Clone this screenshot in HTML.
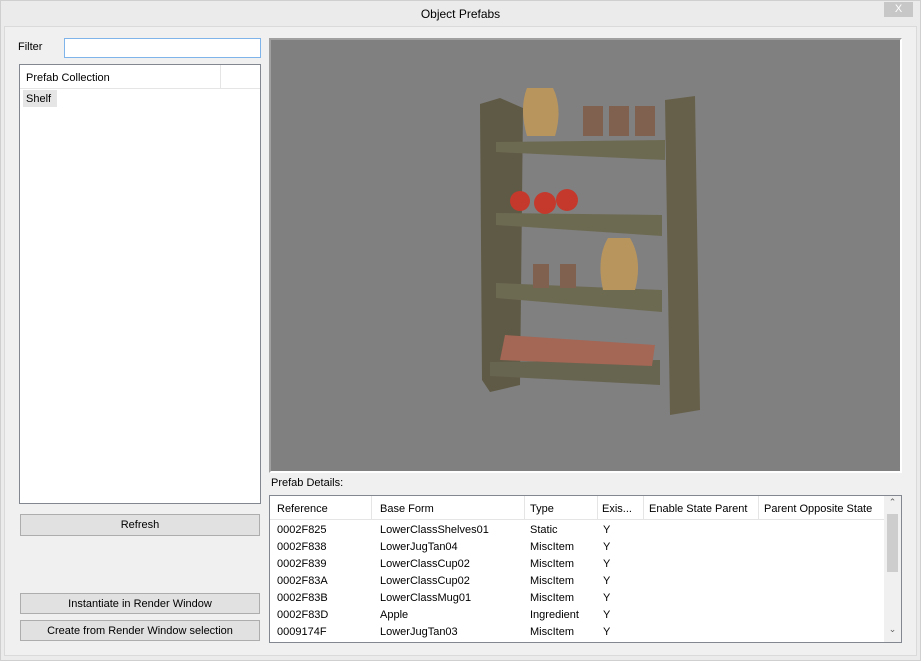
<!DOCTYPE html>
<html><head><style>
*{box-sizing:border-box}
body{margin:0;width:921px;height:661px;background:#ebebeb;font-family:"Liberation Sans",sans-serif;font-size:11px;color:#000;position:relative;overflow:hidden}
.a{position:absolute}
.btn{position:absolute;background:#e1e1e1;border:1px solid #adadad;text-align:center;line-height:20px;font-size:11px}
.row{position:absolute;height:17px;line-height:17px;left:0;width:620px}
.row span{position:absolute}
</style></head><body>
<div class="a" style="left:0;top:0;width:921px;height:661px;border:1px solid #cfcfcf"></div>
<div class="a" style="left:0;top:7px;width:921px;text-align:center;font-size:12px">Object Prefabs</div>
<div class="a" style="left:884px;top:2px;width:29px;height:15px;background:#c7c7c7;color:#fff;text-align:center;line-height:15px;font-size:11px">X</div>
<div class="a" style="left:4px;top:26px;width:913px;height:630px;background:#f0f0f0;border:1px solid #dadada"></div>
<div class="a" style="left:18px;top:41px">Filter</div>
<div class="a" style="left:64px;top:38px;width:197px;height:20px;background:#fff;border:1px solid #7eb4ea"></div>
<div class="a" style="left:19px;top:64px;width:242px;height:440px;background:#fff;border:1px solid #828790"></div>
<div class="a" style="left:20px;top:65px;width:240px;height:24px;border-bottom:1px solid #e5e5e5"></div>
<div class="a" style="left:220px;top:65px;width:1px;height:24px;background:#e5e5e5"></div>
<div class="a" style="left:26px;top:72px">Prefab Collection</div>
<div class="a" style="left:23px;top:90px;width:34px;height:17px;background:#e5e5e5"></div>
<div class="a" style="left:26px;top:93px">Shelf</div>
<div class="btn" style="left:20px;top:514px;width:240px;height:22px">Refresh</div>
<div class="btn" style="left:20px;top:593px;width:240px;height:21px">Instantiate in Render Window</div>
<div class="btn" style="left:20px;top:620px;width:240px;height:21px">Create from Render Window selection</div>
<div class="a" style="left:269px;top:38px;width:633px;height:435px;background:#808080;border:2px solid #a0a0a0;border-right-color:#fff;border-bottom-color:#fff">
<svg width="629" height="431" style="position:absolute;left:0;top:0">
<g transform="translate(-271,-40)">
<polygon points="480,104 500,98 523,108 520,385 490,392 482,380" fill="#5f5a45"/>
<polygon points="665,100 695,96 700,410 670,415" fill="#66604a"/>
<polygon points="496,142 665,140 665,160 496,152" fill="#6d6a52"/>
<polygon points="496,213 662,215 662,236 496,225" fill="#6d6a52"/>
<polygon points="496,283 662,290 662,312 496,298" fill="#6d6a52"/>
<polygon points="490,362 660,360 660,385 490,376" fill="#676450"/>
<polygon points="505,335 655,345 652,366 500,360" fill="#a46655"/>
<path d="M527,88 q-8,20 0,48 h28 q8,-28 -2,-48z" fill="#b9955e"/>
<path d="M608,238 q-12,20 -5,52 h32 q8,-30 -5,-52z" fill="#b9955e"/>
<rect x="583" y="106" width="20" height="30" fill="#80604e"/><rect x="609" y="106" width="20" height="30" fill="#80604e"/><rect x="635" y="106" width="20" height="30" fill="#80604e"/>
<rect x="533" y="264" width="16" height="24" fill="#80604e"/><rect x="560" y="264" width="16" height="24" fill="#80604e"/>
<circle cx="520" cy="201" r="10" fill="#c4392c"/><circle cx="545" cy="203" r="11" fill="#c4392c"/><circle cx="567" cy="200" r="11" fill="#c4392c"/>
</g></svg></div>
<div class="a" style="left:271px;top:477px">Prefab Details:</div>
<div class="a" style="left:269px;top:495px;width:633px;height:148px;background:#fff;border:1px solid #828790;overflow:hidden">
<div class="a" style="left:0;top:0;width:615px;height:24px;border-bottom:1px solid #e5e5e5"></div>
<div class="a" style="left:101px;top:0;width:1px;height:24px;background:#e5e5e5"></div>
<div class="a" style="left:254px;top:0;width:1px;height:24px;background:#e5e5e5"></div>
<div class="a" style="left:327px;top:0;width:1px;height:24px;background:#e5e5e5"></div>
<div class="a" style="left:373px;top:0;width:1px;height:24px;background:#e5e5e5"></div>
<div class="a" style="left:488px;top:0;width:1px;height:24px;background:#e5e5e5"></div>
<div class="row" style="top:5px"><span style="left:7px">Reference</span><span style="left:110px">Base Form</span><span style="left:260px">Type</span><span style="left:332px">Exis...</span><span style="left:379px">Enable State Parent</span><span style="left:494px">Parent Opposite State</span></div>
<div class="row" style="top:26px"><span style="left:7px">0002F825</span><span style="left:110px">LowerClassShelves01</span><span style="left:260px">Static</span><span style="left:333px">Y</span></div>
<div class="row" style="top:43px"><span style="left:7px">0002F838</span><span style="left:110px">LowerJugTan04</span><span style="left:260px">MiscItem</span><span style="left:333px">Y</span></div>
<div class="row" style="top:60px"><span style="left:7px">0002F839</span><span style="left:110px">LowerClassCup02</span><span style="left:260px">MiscItem</span><span style="left:333px">Y</span></div>
<div class="row" style="top:77px"><span style="left:7px">0002F83A</span><span style="left:110px">LowerClassCup02</span><span style="left:260px">MiscItem</span><span style="left:333px">Y</span></div>
<div class="row" style="top:94px"><span style="left:7px">0002F83B</span><span style="left:110px">LowerClassMug01</span><span style="left:260px">MiscItem</span><span style="left:333px">Y</span></div>
<div class="row" style="top:111px"><span style="left:7px">0002F83D</span><span style="left:110px">Apple</span><span style="left:260px">Ingredient</span><span style="left:333px">Y</span></div>
<div class="row" style="top:128px"><span style="left:7px">0009174F</span><span style="left:110px">LowerJugTan03</span><span style="left:260px">MiscItem</span><span style="left:333px">Y</span></div>
<div class="a" style="left:614px;top:0;width:17px;height:146px;background:#f0f0f0"></div>
<div class="a" style="left:617px;top:18px;width:11px;height:58px;background:#cdcdcd"></div>
<div class="a" style="left:614px;top:1px;width:17px;text-align:center;font-size:9px;color:#606060">&#8963;</div>
<div class="a" style="left:614px;top:128px;width:17px;text-align:center;font-size:9px;color:#606060">&#8964;</div>
</div>
</body></html>
